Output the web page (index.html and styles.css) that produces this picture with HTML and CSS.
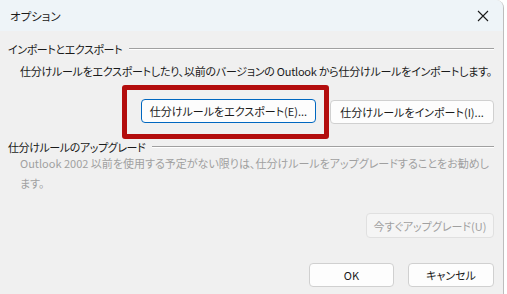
FILE: index.html
```html
<!DOCTYPE html>
<html lang="ja">
<head>
    <meta charset="UTF-8">
    <title>オプション</title>
    <link rel="stylesheet" href="styles.css">
</head>
<body>
    <div class="dialog">
        <div class="titlebar">
            <span class="title">オプション</span>
            <span class="close">
                <svg width="12" height="12" viewBox="0 0 12 12"><path d="M1 1L11 11M11 1L1 11" stroke="#1a1a1a" stroke-width="1.1" fill="none"/></svg>
            </span>
        </div>
        <div class="content">
            <div class="group-head">
                <span>インポートとエクスポート</span>
                <div class="rule"></div>
            </div>
            <p class="desc">仕分けルールをエクスポートしたり、以前のバージョンの Outlook から仕分けルールをインポートします。</p>
            <div class="io-row">
                <div class="highlight">
                    <button class="btn focused">仕分けルールをエクスポート(E)...</button>
                </div>
                <button class="btn import">仕分けルールをインポート(I)...</button>
            </div>
            <div class="group-head">
                <span>仕分けルールのアップグレード</span>
                <div class="rule"></div>
            </div>
            <p class="desc muted">Outlook 2002 以前を使用する予定がない限りは、仕分けルールをアップグレードすることをお勧めし<br>ます。</p>
            <div class="upgrade-row">
                <button class="btn disabled">今すぐアップグレード(U)</button>
            </div>
            <div class="footer">
                <button class="btn ok">OK</button>
                <button class="btn cancel">キャンセル</button>
            </div>
        </div>
    </div>
</body>
</html>
```

FILE: styles.css
```css
body {
    margin: 0;
    background-color: #ffffff;
    font-family: "Noto Sans CJK JP", "Noto Sans", sans-serif;
    font-size: 11.5px;
    font-feature-settings: "palt";
    color: #1a1a1a;
}
.dialog {
    width: 503px;
    height: 300px;
    background-color: #f0f0f0;
    border-right: 1px solid #bdbdbd;
    border-top-right-radius: 8px;
    overflow: hidden;
}
.titlebar {
    height: 31px;
    background-color: #eef4f8;
    display: flex;
    align-items: center;
    justify-content: space-between;
    padding: 0 14px 0 10px;
}
.close {
    display: flex;
}
.content {
    padding: 10px 9px 0 8px;
}
.group-head {
    display: flex;
    align-items: center;
    gap: 7px;
    height: 16px;
    line-height: 16px;
    font-size: 11px;
    letter-spacing: -0.4px;
    white-space: nowrap;
}
.group-head .rule {
    flex: 1;
    border-top: 1px solid #a0a0a0;
    border-bottom: 1px solid #ffffff;
}
.desc {
    margin: 4px 0 0 12px;
    font-size: 11px;
    line-height: 20px;
    letter-spacing: -0.25px;
    white-space: nowrap;
}
.muted {
    color: #a0a0a0;
    margin-top: -2px;
    letter-spacing: 0;
}
.io-row {
    display: flex;
    align-items: center;
    justify-content: flex-end;
    margin-top: 4px;
}
.highlight {
    border: 5px solid #b30d0d;
    border-radius: 3px;
    padding: 9px 8px 11px 14px;
    display: flex;
}
.btn {
    font-family: inherit;
    font-size: 11px;
    font-feature-settings: "palt";
    color: #1a1a1a;
    background-color: #fdfdfd;
    border: 1px solid #d0d0d0;
    border-radius: 4px;
    height: 24px;
    padding: 0;
    white-space: nowrap;
}
.focused {
    border-color: #0067c0;
    width: 175px;
}
.import {
    width: 164px;
    margin-left: 1px;
}
.upgrade-row {
    display: flex;
    justify-content: flex-end;
    margin-top: 20px;
}
.disabled {
    color: #a0a0a0;
    background-color: #f5f5f5;
    border-color: #e0e0e0;
    width: 128px;
    height: 25px;
}
.footer {
    display: flex;
    justify-content: flex-end;
    gap: 14px;
    margin-top: 25px;
}
.ok {
    width: 85px;
}
.cancel {
    width: 86px;
}
```
